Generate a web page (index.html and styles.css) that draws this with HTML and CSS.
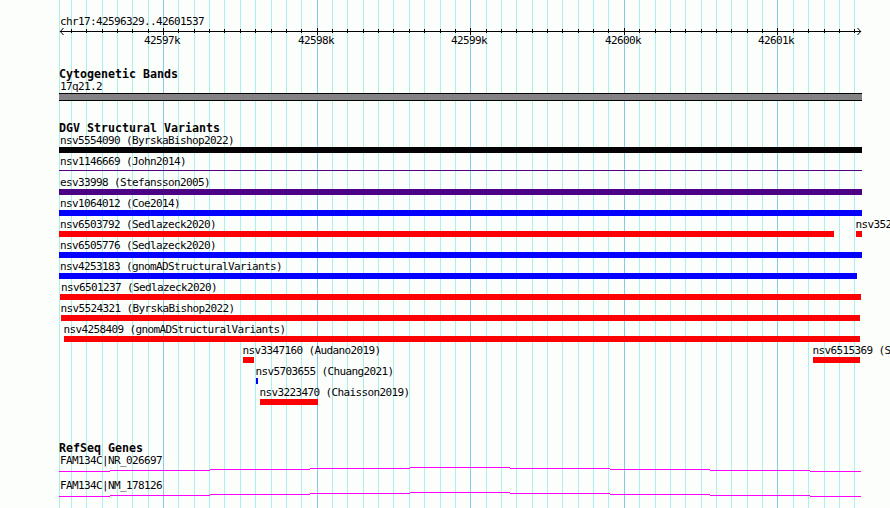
FILE: index.html
```html
<!DOCTYPE html>
<html lang="en">
<head>
	<meta charset="UTF-8">
	<meta name="viewport" content="width=device-width, initial-scale=1.0">
	<title>chr17:42596329..42601537</title>
	<link rel="stylesheet" href="styles.css">
</head>
<body>
	<div class="browser">
		<svg class="grid" width="890" height="508">
			<g id="gridLines" transform="translate(.5 0)"></g>
		</svg>

		<div class="ruler">
			<div class="label">chr17:42596329..42601537</div>
			<svg class="scale" width="803" height="21" viewBox="59 27 803 21">
				<g id="ticks" transform="translate(.5 0)"></g>
				<path class="axis" d="M60 31.5H861"/>
				<path class="axis" d="M63.5 28L60.3 31.5L63.5 35M857.5 28L860.7 31.5L857.5 35"/>
				<g class="numbers">
					<text x="144" y="44">42597k</text>
					<text x="298" y="44">42598k</text>
					<text x="451" y="44">42599k</text>
					<text x="605" y="44">42600k</text>
					<text x="758" y="44">42601k</text>
				</g>
			</svg>
		</div>

		<div class="track cyto">
			<h2>Cytogenetic Bands</h2>
			<div class="label">17q21.2</div>
			<div class="band"></div>
		</div>

		<div class="track variants">
			<h2>DGV Structural Variants</h2>
			<div id="rows"></div>
		</div>

		<div class="track genes">
			<h2>RefSeq Genes</h2>
			<div class="gene">
				<div class="label">FAM134C|NR_026697</div>
				<svg width="803" height="6" viewBox="59 466 803 6">
					<path class="intron" d="M59 471.5H110M110 470.5H210M210 469.5H310M310 468.5H410M410 467.5H510M510 468.5H610M610 469.5H710M710 470.5H810M810 471.5H861"/>
				</svg>
			</div>
			<div class="gene">
				<div class="label">FAM134C|NM_178126</div>
				<svg width="803" height="6" viewBox="59 466 803 6">
					<path class="intron" d="M59 471.5H110M110 470.5H210M210 469.5H310M310 468.5H410M410 467.5H510M510 468.5H610M610 469.5H710M710 470.5H810M810 471.5H861"/>
				</svg>
			</div>
		</div>
	</div>
	<script>
const left = 59;

// each row: [name, start px, end px, type]
const rows = [
	[["nsv5554090 (ByrskaBishop2022)", 59, 862, "complex"]],
	[["nsv1146669 (John2014)", 59, 862, "inversion thin"]],
	[["esv33998 (Stefansson2005)", 59, 862, "inversion"]],
	[["nsv1064012 (Coe2014)", 59, 862, "gain"]],
	[["nsv6503792 (Sedlazeck2020)", 59, 834, "loss"], ["nsv3520", 856, 862, "loss"]],
	[["nsv6505776 (Sedlazeck2020)", 59, 862, "gain"]],
	[["nsv4253183 (gnomADStructuralVariants)", 59, 857, "gain"]],
	[["nsv6501237 (Sedlazeck2020)", 60, 861, "loss"]],
	[["nsv5524321 (ByrskaBishop2022)", 61, 860, "loss"]],
	[["nsv4258409 (gnomADStructuralVariants)", 64, 860, "loss"]],
	[["nsv3347160 (Audano2019)", 243, 254, "loss"], ["nsv6515369 (Sedlazeck2020)", 813, 860, "loss"]],
	[["nsv5703655 (Chuang2021)", 256, 258, "gain"]],
	[["nsv3223470 (Chaisson2019)", 260, 318, "loss"]],
];

let html = "";
rows.forEach(row => {
	let x = left;
	html += '<div class="row">';
	row.forEach(([name, start, end, type]) => {
		const first = start <= left + 1 ? " edge" : "";
		html += `<div class="feature${first}" style="margin-left:${start - x}px;width:${end - start}px"><div class="label">${name}</div><div class="bar ${type}"></div></div>`;
		x = end;
	});
	html += "</div>";
});
document.getElementById("rows").innerHTML = html;

// a line every 100 bp, a darker one every 1000
let lines = '<path class="minor" d="M59 0V508"/>';
let ticks = "";
for (let i = 0; i < 52; i++) {
	const x = Math.floor(71.36 + i * 15.36);
	const major = i % 10 === 6;
	lines += `<path class="${major ? "major" : "minor"}" d="M${x} 0V508"/>`;
	ticks += `<path class="axis" d="M${x} ${major ? "28V35" : "29V33"}"/>`;
}
document.getElementById("gridLines").innerHTML = lines;
document.getElementById("ticks").innerHTML = ticks;
	</script>
</body>
</html>
```
FILE: styles.css
```css
body {
	margin: 0;
	background-color: #fcfefc;
	color: #040204;
	font-family: "DejaVu Sans Mono", monospace;
	overflow: hidden;
}

.browser {
	position: relative;
	width: 831px;
	height: 493px;
	padding: 15px 0 0 59px;
	overflow: hidden;
}

svg {
	display: block;
}

/* lines behind all the tracks */
.grid {
	position: absolute;
	top: 0;
	left: 0;
	z-index: -1;
}

.minor {
	stroke: #acf0ec;
}

.major {
	stroke: #84cbec;
}

.axis {
	stroke: #040204;
	fill: none;
}

.label {
	height: 12px;
	padding-left: 1px;
	font-size: 11px;
	line-height: 14px;
	letter-spacing: -0.62px;
	white-space: pre;
}

.numbers {
	font-size: 11px;
	letter-spacing: -0.62px;
	fill: #040204;
}

h2 {
	height: 12px;
	margin: 0;
	font-size: 11.63px;
	font-weight: bold;
	line-height: 12px;
	white-space: pre;
}

.ruler {
	height: 53px;
}

.cyto {
	height: 54px;
}

.cyto .label {
	height: 13px;
}

.band {
	width: 803px;
	height: 6px;
	background-color: #848284;
	border-top: 1px solid #040204;
	border-bottom: 1px solid #040204;
}

.variants {
	height: 320px;
}

.row {
	display: flex;
	height: 21px;
}

.feature {
	flex: none;
}

.feature .label {
	height: 13px;
	padding-left: 0;
	text-indent: -0.5px;
}

.feature.edge .label {
	padding-left: 1px;
	text-indent: 0;
}

.bar {
	height: 6px;
}

.complex {
	background-color: #040204;
}

.inversion {
	background-color: #4c0284;
}

.thin {
	height: 1px;
	margin-top: 2px;
}

.gain {
	background-color: #0402fc;
}

.loss {
	background-color: #fc0204;
}

.gene {
	height: 25px;
}

.intron {
	stroke: #fc02fc;
	fill: none;
}
```
